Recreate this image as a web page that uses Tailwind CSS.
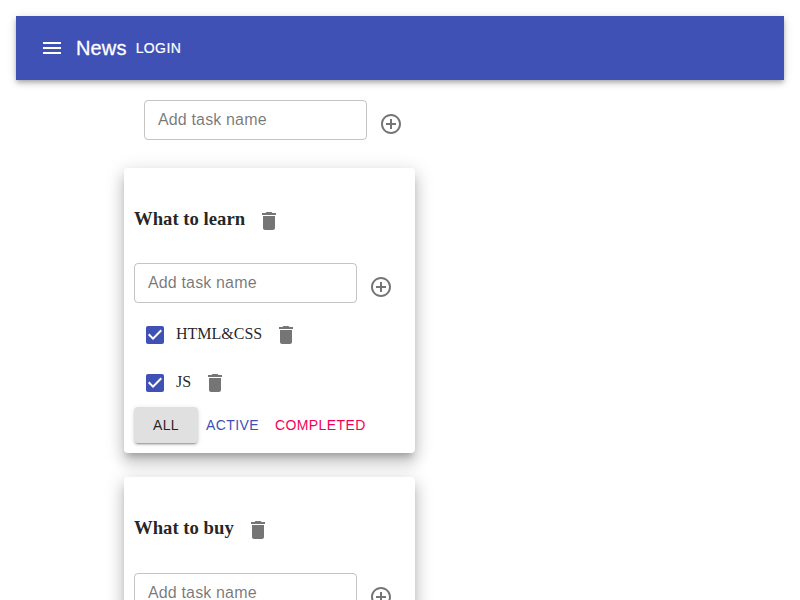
<!DOCTYPE html>
<html lang="en">
<head>
<meta charset="utf-8">
<title>Tasks</title>
<script src="https://cdn.jsdelivr.net/npm/@tailwindcss/browser@4"></script>
</head>
<body class="h-[600px] overflow-hidden bg-white p-4 font-['Liberation_Serif',serif] text-base text-black/87">
<svg class="hidden">
  <symbol id="trash" viewBox="0 0 24 24"><path d="M6 19c0 1.1.9 2 2 2h8c1.1 0 2-.9 2-2V7H6v12zM19 4h-3.5l-1-1h-5l-1 1H5v2h14V4z"/></symbol>
  <symbol id="add" viewBox="0 0 24 24"><path d="M13 7h-2v4H7v2h4v4h2v-4h4v-2h-4V7zm-1-5C6.48 2 2 6.48 2 12s4.48 10 10 10 10-4.48 10-10S17.52 2 12 2zm0 18c-4.41 0-8-3.59-8-8s3.59-8 8-8 8 3.59 8 8-3.59 8-8 8z"/></symbol>
  <symbol id="check" viewBox="0 0 24 24"><path d="M19 3H5c-1.11 0-2 .9-2 2v14c0 1.1.89 2 2 2h14c1.11 0 2-.9 2-2V5c0-1.1-.89-2-2-2zm-9 14l-5-5 1.41-1.41L10 14.17l7.59-7.59L19 8l-9 9z"/></symbol>
</svg>
<header class="flex h-16 items-center bg-[#3f51b5] px-6 font-['Liberation_Sans',sans-serif] text-white shadow-[0_2px_4px_-1px_rgba(0,0,0,0.2),0_4px_5px_0_rgba(0,0,0,0.14),0_1px_10px_0_rgba(0,0,0,0.12)]">
  <button class="flex size-6 items-center justify-center"><svg class="size-6 fill-current" viewBox="0 0 24 24"><path d="M3 18h18v-2H3v2zm0-5h18v-2H3v2zm0-7v2h18V6H3z"/></svg></button>
  <h6 class="ml-3 text-[20px] leading-8 tracking-[0.15px] [-webkit-text-stroke:0.3px_white]">News</h6>
  <button class="ml-[9px] text-sm leading-6 tracking-[0.4px] [-webkit-text-stroke:0.2px_white]">LOGIN</button>
</header>
<main class="pl-[108px]">
  <form class="flex pt-5 pl-5">
    <input class="h-10 w-[223px] rounded border border-black/23 px-[13px] font-['Liberation_Sans',sans-serif] text-base tracking-[0.15px] placeholder:text-black/54" placeholder="Add task name">
    <button type="button" class="mt-3 ml-3 size-6"><svg class="size-6 fill-black/54"><use href="#add"/></svg></button>
  </form>
  <section class="mt-7 h-[285px] w-[291px] rounded bg-white px-[10px] pt-[39px] shadow-[0_6px_6px_-3px_rgba(0,0,0,0.2),0_10px_14px_1px_rgba(0,0,0,0.14),0_4px_18px_3px_rgba(0,0,0,0.12)]">
    <div class="flex h-7 items-center"><h3 class="pb-[4px] text-[18.72px] leading-[22px] font-bold">What to learn</h3><svg class="ml-3 size-6 fill-black/54"><use href="#trash"/></svg></div>
    <form class="mt-7 flex">
      <input class="h-10 w-[223px] rounded border border-black/23 px-[13px] font-['Liberation_Sans',sans-serif] text-base tracking-[0.15px] placeholder:text-black/54" placeholder="Add task name">
      <button type="button" class="mt-3 ml-3 size-6"><svg class="size-6 fill-black/54"><use href="#add"/></svg></button>
    </form>
    <ul class="mt-2">
      <li class="flex h-12 items-center pl-[9px]"><svg class="size-6 fill-[#3f51b5]"><use href="#check"/></svg><span class="ml-[9px] pb-[2px] leading-[18px]">HTML&amp;CSS</span><svg class="ml-3 size-6 fill-black/54"><use href="#trash"/></svg></li>
      <li class="flex h-12 items-center pl-[9px]"><svg class="size-6 fill-[#3f51b5]"><use href="#check"/></svg><span class="ml-[9px] pb-[2px] leading-[18px]">JS</span><svg class="ml-3 size-6 fill-black/54"><use href="#trash"/></svg></li>
    </ul>
    <div class="flex h-9 font-['Liberation_Sans',sans-serif] text-sm tracking-[0.4px]">
      <button class="w-16 rounded bg-[#e0e0e0] shadow-[0_3px_1px_-2px_rgba(0,0,0,0.2),0_2px_2px_0_rgba(0,0,0,0.14),0_1px_5px_0_rgba(0,0,0,0.12)]">ALL</button>
      <button class="px-2 text-[#3f51b5]">ACTIVE</button>
      <button class="px-2 text-[#f50057]">COMPLETED</button>
    </div>
  </section>
  <section class="mt-6 h-[285px] w-[291px] rounded bg-white px-[10px] pt-[39px] shadow-[0_6px_6px_-3px_rgba(0,0,0,0.2),0_10px_14px_1px_rgba(0,0,0,0.14),0_4px_18px_3px_rgba(0,0,0,0.12)]">
    <div class="flex h-7 items-center"><h3 class="pb-[4px] text-[18.72px] leading-[22px] font-bold">What to buy</h3><svg class="ml-3 size-6 fill-black/54"><use href="#trash"/></svg></div>
    <form class="mt-[29px] flex">
      <input class="h-10 w-[223px] rounded border border-black/23 px-[13px] font-['Liberation_Sans',sans-serif] text-base tracking-[0.15px] placeholder:text-black/54" placeholder="Add task name">
      <button type="button" class="mt-3 ml-3 size-6"><svg class="size-6 fill-black/54"><use href="#add"/></svg></button>
    </form>
  </section>
</main>
</body>
</html>
